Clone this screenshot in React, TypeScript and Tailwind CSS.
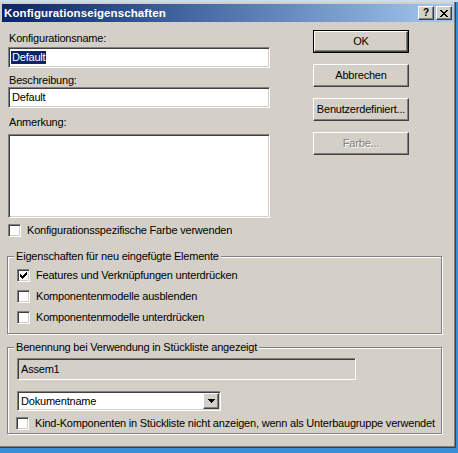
import React from "react";

const sunken =
  "border border-t-[#808080] border-l-[#808080] border-b-white border-r-white shadow-[inset_1px_1px_0_#404040,inset_-1px_-1px_0_#d4d0c8]";
const raised =
  "border border-t-white border-l-white border-b-[#404040] border-r-[#404040] shadow-[inset_-1px_-1px_0_#808080]";

const CheckBox = ({ checked }: { checked?: boolean }) => (
  <span className={`w-[13px] h-[13px] bg-white shrink-0 flex items-center justify-center ${sunken}`}>
    {checked && (
      <svg width="7" height="7" viewBox="0 0 7 7" shapeRendering="crispEdges">
        <path d="M0 2h1v3h-1zM1 3h1v3h-1zM2 4h1v3h-1zM3 3h1v3h-1zM4 2h1v3h-1zM5 1h1v3h-1zM6 0h1v3h-1z" fill="#000" />
      </svg>
    )}
  </span>
);

const CheckRow = ({ label, checked }: { label: string; checked?: boolean }) => (
  <div className="flex items-center h-[13px] gap-[6px]">
    <CheckBox checked={checked} />
    <span className="leading-[13px] whitespace-nowrap">{label}</span>
  </div>
);

const Button = ({ label, disabled, isDefault }: { label: string; disabled?: boolean; isDefault?: boolean }) => {
  const inner = (
    <div
      className={`h-full w-full flex items-center justify-center bg-[#d4d0c8] ${raised} ${
        disabled ? "text-[#808080] [text-shadow:1px_1px_0_#fff]" : "text-black"
      }`}
    >
      {label}
    </div>
  );
  if (isDefault) {
    return <div className="w-[96px] h-[23px] border border-black">{inner}</div>;
  }
  return <div className="w-[96px] h-[23px]">{inner}</div>;
};

const GroupBox = ({ title, className, children }: { title: string; className: string; children: React.ReactNode }) => (
  <div
    className={`relative ml-[5px] w-[435px] border border-[#808080] shadow-[1px_1px_0_#fff,inset_1px_1px_0_#fff] ${className}`}
  >
    <span className="absolute left-[6px] -top-[7px] px-[2px] bg-[#d4d0c8] leading-[13px] whitespace-nowrap">{title}</span>
    {children}
  </div>
);

export default function App() {
  return (
    <div className="w-[458px] h-[453px] bg-[#3a8ed8] flex flex-col overflow-hidden font-['Liberation_Sans',Arial,sans-serif] text-[11px] tracking-[-0.2px] text-black">
      <div className="h-[2px] bg-[#cadcf1]" />
      <div className="w-[456px] h-[446px] bg-[#d4d0c8] p-[2px] shadow-[inset_-1px_-1px_0_#404040,inset_-2px_-2px_0_#808080] flex flex-col">
        {/* title bar */}
        <div className="h-[18px] bg-gradient-to-r from-[#0a246a] to-[#a6caf0] flex items-center pl-[2px] pr-[2px]">
          <span className="text-white font-bold text-[11.5px] tracking-[0.1px] leading-[13px]">Konfigurationseigenschaften</span>
          <div className="ml-auto flex gap-[2px]">
            <div className={`w-[16px] h-[14px] bg-[#d4d0c8] flex items-center justify-center ${raised}`}>
              <span className="font-bold text-[10px] leading-[10px]">?</span>
            </div>
            <div className={`w-[16px] h-[14px] bg-[#d4d0c8] flex items-center justify-center ${raised}`}>
              <svg width="8" height="7" viewBox="0 0 8 7" shapeRendering="crispEdges">
                <path d="M0 0h2v1h-2zM6 0h2v1h-2zM1 1h2v1h-2zM5 1h2v1h-2zM2 2h4v1h-4zM3 3h2v1h-2zM2 4h4v1h-4zM1 5h2v1h-2zM5 5h2v1h-2zM0 6h2v1h-2zM6 6h2v1h-2z" fill="#000" />
              </svg>
            </div>
          </div>
        </div>

        {/* top area */}
        <div className="flex">
          <div className="ml-[6px] w-[262px] flex flex-col">
            <div className="mt-[10px] leading-[13px] pl-[1px]">Konfigurationsname:</div>
            <div className={`mt-[2px] h-[21px] bg-white flex items-center pl-[2px] ${sunken}`}>
              <span className="bg-[#0a246a] text-white leading-[13px] px-[1px]">Default</span>
            </div>
            <div className="mt-[6px] leading-[13px] pl-[1px]">Beschreibung:</div>
            <div className={`h-[21px] bg-white flex items-center pl-[3px] ${sunken}`}>Default</div>
            <div className="mt-[8px] leading-[13px] pl-[1px]">Anmerkung:</div>
            <div className={`mt-[5px] h-[84px] bg-white ${sunken}`} />
            <div className="mt-[6px]">
              <CheckRow label="Konfigurationsspezifische Farbe verwenden" />
            </div>
          </div>
          <div className="ml-[43px] flex flex-col gap-[11px] pt-[8px]">
            <Button label="OK" isDefault />
            <Button label="Abbrechen" />
            <Button label="Benutzerdefiniert..." />
            <Button label="Farbe..." disabled />
          </div>
        </div>

        {/* group 1 */}
        <GroupBox title="Eigenschaften für neu eingefügte Elemente" className="mt-[19px] h-[78px] pl-[9px] pt-[12px]">
          <div className="flex flex-col gap-[8px]">
            <CheckRow label="Features und Verknüpfungen unterdrücken" checked />
            <CheckRow label="Komponentenmodelle ausblenden" />
            <CheckRow label="Komponentenmodelle unterdrücken" />
          </div>
        </GroupBox>

        {/* group 2 */}
        <GroupBox title="Benennung bei Verwendung in Stückliste angezeigt" className="mt-[13px] h-[87px] pl-[9px] pt-[10px]">
          <div className={`w-[339px] h-[22px] flex items-center pl-[3px] ${sunken}`}>Assem1</div>
          <div className={`mt-[11px] w-[204px] h-[20px] bg-white flex items-center pl-[3px] pr-[1px] ${sunken}`}>
            <span>Dokumentname</span>
            <div className={`ml-auto w-[16px] h-[16px] bg-[#d4d0c8] flex items-center justify-center ${raised}`}>
              <svg width="7" height="4" viewBox="0 0 7 4" shapeRendering="crispEdges">
                <path d="M0 0h7v1h-7zM1 1h5v1h-5zM2 2h3v1h-3zM3 3h1v1h-1z" fill="#000" />
              </svg>
            </div>
          </div>
          <div className="mt-[6px] -ml-[1px]">
            <CheckRow label="Kind-Komponenten in Stückliste nicht anzeigen, wenn als Unterbaugruppe verwendet" />
          </div>
        </GroupBox>
      </div>
    </div>
  );
}
